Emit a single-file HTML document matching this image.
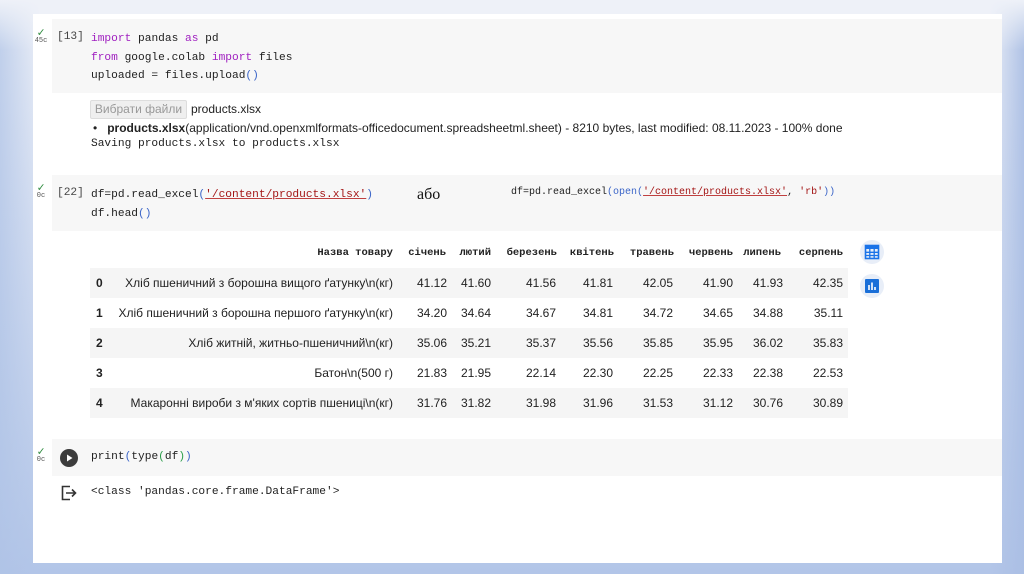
<!DOCTYPE html>
<html><head><meta charset="utf-8"><style>
*{margin:0;padding:0;box-sizing:border-box}
body{width:1024px;height:574px;position:relative;overflow:hidden;font-family:"Liberation Sans",sans-serif;
background:linear-gradient(180deg,#eef1f8 0%,#dbe3f3 30%,#b2c5e8 100%)}
.bgl{position:absolute;left:0;top:0;width:1024px;height:574px;background:linear-gradient(90deg,rgba(175,195,230,.7) 0,rgba(175,195,230,0) 40px,rgba(0,0,0,0) 990px,rgba(170,190,228,.9) 1024px)}
.top{position:absolute;left:0;top:0;width:1024px;height:50px;background:linear-gradient(#eef1f8,rgba(238,241,248,0))}
.panel{position:absolute;left:33px;top:14px;width:969px;height:549px;background:#fff}
.a{position:absolute;white-space:pre}
.m{font-family:"Liberation Mono",monospace;font-size:11.2px;color:#212121}
.cell{position:absolute;left:52px;width:950px;background:#f7f7f7}
.k{color:#a020c0}.p{color:#3b65c8}.s{color:#a31515;text-decoration:underline;text-decoration-color:#c04040}
.chk{position:absolute;font-family:"Liberation Mono",monospace;font-size:7px;color:#555;text-align:center;width:14px;line-height:7px}
.chk b{display:block;color:#2e8b3e;font-size:12px;font-weight:normal;line-height:9px}
.row{position:absolute;left:90px;width:758px;height:30px}
.t{position:absolute;font-size:12px;color:#222;text-align:right;line-height:30px}
.h{position:absolute;font-family:"Liberation Mono",monospace;font-weight:bold;font-size:10.5px;color:#222;text-align:right}
</style></head><body>
<div class="bgl"></div><div class="top"></div>
<div class="panel"></div>

<div class="cell" style="top:19px;height:74px"></div>
<div class="chk" style="left:34px;top:29px"><b>✓</b>45c</div>
<div class="a m" style="left:57px;top:31px;color:#444">[13]</div>
<div class="a m" style="left:91px;top:30px;line-height:18.5px"><span class="k">import</span> pandas <span class="k">as</span> pd
<span class="k">from</span> google.colab <span class="k">import</span> files
uploaded = files.upload<span class="p">()</span></div>

<div class="a" style="left:90px;top:100px;width:97px;height:19px;background:#efefef;border:1px solid #ddd;border-radius:2px;font-size:12px;color:#999;text-align:center;line-height:17px">Вибрати файли</div>
<div class="a" style="left:191px;top:102px;font-size:12px;color:#222">products.xlsx</div>
<div class="a" style="left:93px;top:121px;font-size:12px;color:#222">•&nbsp;&nbsp; <b>products.xlsx</b>(application/vnd.openxmlformats-officedocument.spreadsheetml.sheet) - 8210 bytes, last modified: 08.11.2023 - 100% done</div>
<div class="a m" style="left:91px;top:138px">Saving products.xlsx to products.xlsx</div>

<div class="cell" style="top:175px;height:56px"></div>
<div class="chk" style="left:34px;top:184px"><b>✓</b>0c</div>
<div class="a m" style="left:57px;top:187px;color:#444">[22]</div>
<div class="a m" style="left:91px;top:186px;line-height:19px">df=pd.read_excel<span class="p">(</span><span class="s">'/content/products.xlsx'</span><span class="p">)</span>
df.head<span class="p">()</span></div>
<div class="a" style="left:417px;top:186px;font-family:'Liberation Serif',serif;font-size:16px;color:#111">або</div>
<div class="a m" style="left:511px;top:187px;font-size:10px">df=pd.read_excel<span class="p">(open(</span><span class="s">'/content/products.xlsx'</span>, <span style="color:#a31515">'rb'</span><span class="p">))</span></div>

<div class="h" style="left:200px;top:247px;width:193px">Назва товару</div>
<div class="h" style="left:400px;top:247px;width:46px">січень</div>
<div class="h" style="left:450px;top:247px;width:41px">лютий</div>
<div class="h" style="left:490px;top:247px;width:67px">березень</div>
<div class="h" style="left:560px;top:247px;width:54px">квітень</div>
<div class="h" style="left:620px;top:247px;width:54px">травень</div>
<div class="h" style="left:680px;top:247px;width:53px">червень</div>
<div class="h" style="left:735px;top:247px;width:46px">липень</div>
<div class="h" style="left:790px;top:247px;width:53px">серпень</div>

<div class="row" style="top:268px;background:#f5f5f5"></div>
<div class="row" style="top:328px;background:#f5f5f5"></div>
<div class="row" style="top:388px;background:#f5f5f5"></div>

<div id="tb"></div>
<script>
var d=[["0","Хліб пшеничний з борошна вищого ґатунку\\n(кг)","41.12","41.60","41.56","41.81","42.05","41.90","41.93","42.35"],
["1","Хліб пшеничний з борошна першого ґатунку\\n(кг)","34.20","34.64","34.67","34.81","34.72","34.65","34.88","35.11"],
["2","Хліб житній, житньо-пшеничний\\n(кг)","35.06","35.21","35.37","35.56","35.85","35.95","36.02","35.83"],
["3","Батон\\n(500 г)","21.83","21.95","22.14","22.30","22.25","22.33","22.38","22.53"],
["4","Макаронні вироби з м'яких сортів пшениці\\n(кг)","31.76","31.82","31.98","31.96","31.53","31.12","30.76","30.89"]];
var r=[393,447,491,556,613,673,733,783,843],h="";
d.forEach(function(x,i){var y=268+i*30;
h+='<div class="t" style="left:96px;top:'+y+'px;font-weight:bold;text-align:left">'+x[0]+'</div>';
for(var j=1;j<10;j++){var w=j==1?290:60;h+='<div class="t" style="left:'+(r[j-1]-w)+'px;width:'+w+'px;top:'+y+'px">'+x[j]+'</div>';}});
document.getElementById("tb").innerHTML=h;
</script>

<div class="a" style="left:860px;top:240px;width:24px;height:24px;border-radius:12px;background:#e8eef8"></div>
<svg class="a" style="left:864px;top:244px" width="16" height="16" viewBox="0 0 16 16"><rect x="1.5" y="1.5" width="13" height="13" fill="none" stroke="#1a73e8" stroke-width="1.6"/><rect x="1.5" y="1.5" width="13" height="3.5" fill="#1a73e8"/><path d="M1.5 8.3H14.5M1.5 11.5H14.5M5.8 5V14.5M10.2 5V14.5" stroke="#1a73e8" stroke-width="1.3"/></svg>
<div class="a" style="left:860px;top:274px;width:24px;height:24px;border-radius:12px;background:#e8eef8"></div>
<svg class="a" style="left:864px;top:278px" width="16" height="16" viewBox="0 0 16 16"><rect x="1" y="1" width="14" height="14" rx="1" fill="#1a6fd8"/><path d="M5 7V12M8 4.5V12M11 9V12" stroke="#fff" stroke-width="1.6"/></svg>

<div class="cell" style="top:439px;height:37px"></div>
<div class="chk" style="left:34px;top:448px"><b>✓</b>0c</div>
<div class="a" style="left:60px;top:449px;width:18px;height:18px;border-radius:9px;background:#3c3c3c"></div>
<svg class="a" style="left:60px;top:449px" width="18" height="18"><path d="M7 5.5L12.5 9L7 12.5Z" fill="#fff"/></svg>
<div class="a m" style="left:91px;top:451px">print<span class="p">(</span>type<span style="color:#2a9d4a">(</span>df<span style="color:#2a9d4a">)</span><span class="p">)</span></div>
<svg class="a" style="left:61px;top:485px" width="16" height="16" viewBox="0 0 16 16"><path d="M9 1.5H1.5V14.5H9" fill="none" stroke="#333" stroke-width="1.6"/><path d="M5 8H14.5M11 4.5L14.5 8L11 11.5" fill="none" stroke="#333" stroke-width="1.6"/></svg>
<div class="a m" style="left:91px;top:486px">&lt;class 'pandas.core.frame.DataFrame'&gt;</div>
</body></html>
